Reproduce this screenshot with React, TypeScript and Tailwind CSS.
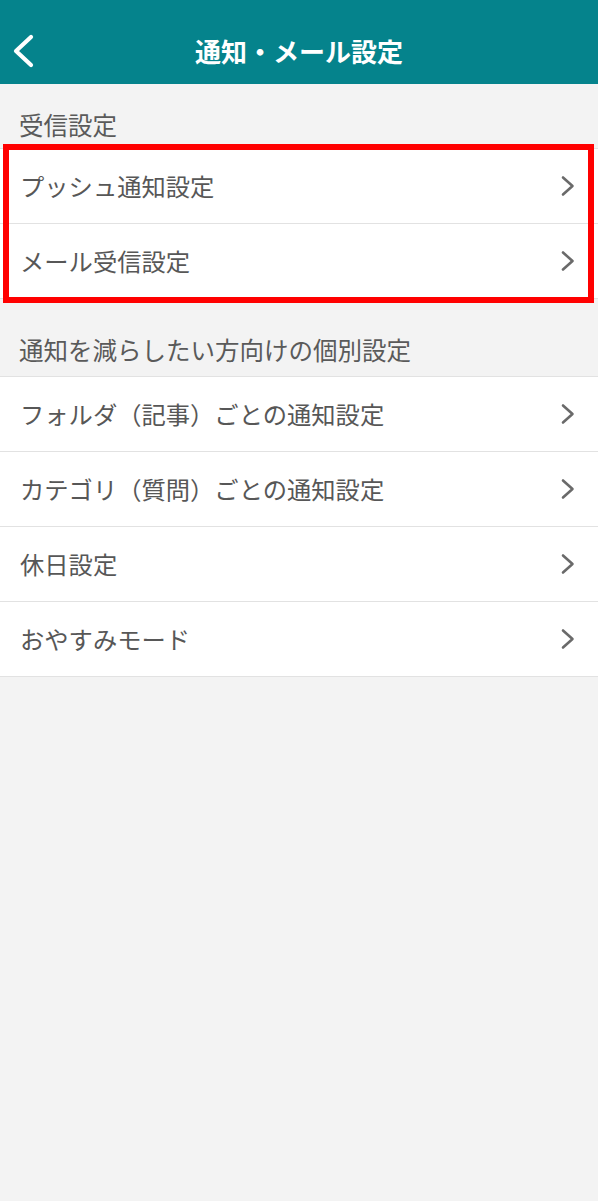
import React from 'react'

const font = { fontFamily: '"Noto Sans CJK JP", "Noto Sans", sans-serif' }

const receiveItems = ['プッシュ通知設定', 'メール受信設定']
const detailItems = [
  'フォルダ（記事）ごとの通知設定',
  'カテゴリ（質問）ごとの通知設定',
  '休日設定',
  'おやすみモード',
]

function Chevron() {
  return (
    <svg width="14" height="22" viewBox="0 0 14 22" fill="none" className="shrink-0">
      <polyline
        points="2,2.5 11.5,11 2,19.5"
        stroke="#6a6a6a"
        strokeWidth="2.6"
        strokeLinecap="round"
        strokeLinejoin="round"
      />
    </svg>
  )
}

function Row({ label }: { label: string }) {
  return (
    <div className="flex h-[75px] items-center justify-between border-b-[1.5px] border-[#e2e2e2] bg-white pl-[20px] pr-[23px]">
      <span className="text-[24.3px] leading-[28px] text-[#575757]">{label}</span>
      <Chevron />
    </div>
  )
}

export default function App() {
  return (
    <div className="min-h-[1201px] w-full bg-[#f3f3f3]" style={font}>
      {/* header */}
      <div className="relative flex h-[84px] items-center justify-center bg-[#05838c] pt-[18px]">
        <div className="absolute left-[12px] top-[34px]">
          <svg width="24" height="34" viewBox="0 0 24 34" fill="none">
            <polyline
              points="19,3 4,17 19,31"
              stroke="#ffffff"
              strokeWidth="4.2"
              strokeLinecap="round"
              strokeLinejoin="round"
            />
          </svg>
        </div>
        <h1 className="text-[26px] font-bold leading-[30px] text-white">通知・メール設定</h1>
      </div>

      {/* receive settings */}
      <div className="pl-[19px] pt-[27px] pb-[9px] text-[24.5px] leading-[28px] text-[#5a5a5a]">受信設定</div>
      <div className="relative border-t-[1.5px] border-[#e2e2e2]">
        {receiveItems.map((item) => (
          <Row key={item} label={item} />
        ))}
        <div className="pointer-events-none absolute -top-[5px] -bottom-[4px] left-[3px] right-[4px] border-[6px] border-[#ff0000]" />
      </div>

      {/* individual settings */}
      <div className="pl-[19px] pt-[37px] pb-[12px] text-[24.5px] leading-[28px] text-[#5a5a5a]">
        通知を減らしたい方向けの個別設定
      </div>
      <div className="border-t-[1.5px] border-[#e2e2e2]">
        {detailItems.map((item) => (
          <Row key={item} label={item} />
        ))}
      </div>
    </div>
  )
}
